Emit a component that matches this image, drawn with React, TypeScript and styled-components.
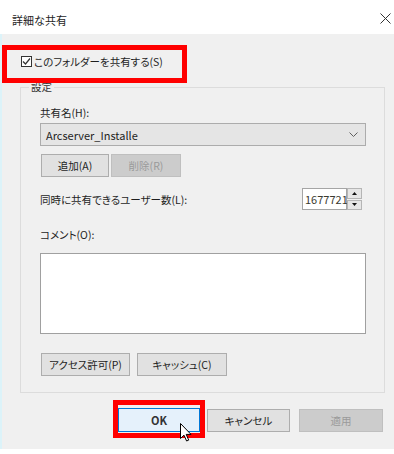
import React from 'react';
import styled, { createGlobalStyle } from 'styled-components';

const GlobalStyle = createGlobalStyle`
  html, body {
    margin: 0;
    padding: 0;
    background: #ffffff;
  }
  body {
    font-family: "Noto Sans CJK JP", "Noto Sans", sans-serif;
    font-feature-settings: "palt";
    color: #1e1e1e;
  }
`;

const Window = styled.div`
  width: 394px;
  height: 449px;
  display: flex;
  flex-direction: column;
  background: #f0f0f0;
`;

const TitleBar = styled.div`
  height: 34px;
  flex-shrink: 0;
  display: flex;
  align-items: flex-start;
  justify-content: space-between;
  padding: 0 3px 0 12px;
  background: #ffffff;
`;

const Title = styled.span`
  margin-top: 13px;
  font-size: 11px;
  line-height: 14px;
  font-feature-settings: normal;
`;

const CloseIcon = styled.svg`
  margin-top: 13px;
  width: 11px;
  height: 11px;
`;

const Body = styled.div`
  flex: 1;
  display: flex;
  flex-direction: column;
  border-left: 2px solid #dcf3f9;
`;

const Highlight = styled.div<{ $pad?: string }>`
  position: relative;
  box-sizing: border-box;
  border: 5px solid #ff0000;
  padding: ${p => p.$pad || '0'};
`;

const ShareToggle = styled(Highlight)`
  margin-top: 11px;
  width: 185px;
  height: 38px;
  display: flex;
  align-items: center;
  gap: 2px;
  padding: 0 0 4px 14px;
  font-size: 10.5px;
  line-height: 14px;
`;

const CheckBox = styled.span`
  width: 11px;
  height: 11px;
  box-sizing: border-box;
  border: 1px solid #333333;
  background: #ffffff;
  display: flex;
  align-items: center;
  justify-content: center;
  margin-bottom: 2px;
`;

const Group = styled.fieldset`
  margin: -2px 9px 0 18px;
  padding: 0 18px 16px 19px;
  border: 1px solid #dcdcdc;
  min-width: 0;
  display: flex;
  flex-direction: column;
`;

const GroupLabel = styled.legend`
  margin-left: -11px;
  padding: 0 2px;
  font-size: 10.5px;
  line-height: 12px;
  color: #333333;
`;

const FieldLabel = styled.div<{ $top: number }>`
  margin-top: ${p => p.$top}px;
  font-size: 10.5px;
  line-height: 14px;
`;

const ComboBox = styled.div`
  margin-top: 3px;
  height: 23px;
  box-sizing: border-box;
  display: flex;
  align-items: center;
  justify-content: space-between;
  padding: 0 7px 0 5px;
  background: #e5e5e5;
  border: 1px solid #acacac;
  font-size: 11px;
  font-feature-settings: normal;
`;

const ButtonRow = styled.div<{ $top: number; $gap: number }>`
  margin-top: ${p => p.$top}px;
  display: flex;
  gap: ${p => p.$gap}px;
  padding-left: 1px;
`;

const Button = styled.div<{ $width: number; $disabled?: boolean }>`
  width: ${p => p.$width}px;
  height: 23px;
  box-sizing: border-box;
  display: flex;
  align-items: center;
  justify-content: center;
  font-size: 10.5px;
  background: ${p => (p.$disabled ? '#cccccc' : '#e1e1e1')};
  border: 1px solid ${p => (p.$disabled ? '#bfbfbf' : '#adadad')};
  color: ${p => (p.$disabled ? '#9a9a9a' : '#1e1e1e')};
`;

const LimitRow = styled.div`
  margin-top: 11px;
  height: 22px;
  display: flex;
  align-items: center;
  justify-content: space-between;
  padding-right: 4px;
  font-size: 10.5px;
`;

const Spinner = styled.div`
  display: flex;
  height: 22px;
`;

const SpinValue = styled.div`
  width: 45px;
  box-sizing: border-box;
  border: 1px solid #a5a5a5;
  background: #ffffff;
  padding-left: 2px;
  font-size: 11px;
  line-height: 20px;
  color: #3a3a30;
  font-feature-settings: normal;
`;

const SpinButtons = styled.div`
  width: 15px;
  display: flex;
  flex-direction: column;
  gap: 1px;
`;

const SpinButton = styled.div`
  flex: 1;
  display: flex;
  align-items: center;
  justify-content: center;
  background: #e6e6e6;
  border: 1px solid #b5b5b5;
`;

const CommentBox = styled.textarea`
  margin-top: 11px;
  height: 81px;
  box-sizing: border-box;
  border: 1px solid #a0a0a0;
  background: #ffffff;
  resize: none;
  outline: none;
`;

const Footer = styled.div`
  margin-top: 7px;
  display: flex;
  align-items: flex-start;
  justify-content: flex-end;
  padding-right: 11px;
`;

const OkFrame = styled(Highlight)`
  width: 92px;
  height: 38px;
  padding: 3px 0 1px;
`;

const OkButton = styled.div`
  height: 24px;
  box-sizing: border-box;
  display: flex;
  align-items: center;
  justify-content: center;
  background: #e5f1fb;
  border: 1px solid #0078d7;
  font-size: 11px;
  font-weight: bold;
  color: #333333;
  font-feature-settings: normal;
`;

const FooterButton = styled(Button)<{ $left: number }>`
  margin-top: 9px;
  margin-left: ${p => p.$left}px;
`;

const Pointer = styled.svg`
  position: absolute;
  left: 62px;
  top: 18px;
  width: 13px;
  height: 19px;
`;

const Chevron = () => (
  <svg width="9" height="5" viewBox="0 0 9 5">
    <path d="M0.5 0.5 L4.5 4.5 L8.5 0.5" fill="none" stroke="#606060" strokeWidth="1" />
  </svg>
);

const Arrow = ({ up }: { up?: boolean }) => (
  <svg width="5" height="3" viewBox="0 0 5 3">
    <path d={up ? 'M2.5 0 L5 3 L0 3 Z' : 'M0 0 L5 0 L2.5 3 Z'} fill="#111111" />
  </svg>
);

const App: React.FC = () => {
  return (
    <>
      <GlobalStyle />
      <Window>
        <TitleBar>
          <Title>詳細な共有</Title>
          <CloseIcon viewBox="0 0 11 11">
            <path d="M0.5 0.5 L10.5 10.5 M10.5 0.5 L0.5 10.5" stroke="#333333" strokeWidth="1" />
          </CloseIcon>
        </TitleBar>
        <Body>
          <ShareToggle>
            <CheckBox>
              <svg width="9" height="9" viewBox="0 0 9 9">
                <path d="M1 4.5 L3.5 7 L8 1.5" fill="none" stroke="#333333" strokeWidth="1.2" />
              </svg>
            </CheckBox>
            <span>このフォルダーを共有する(S)</span>
          </ShareToggle>

          <Group>
            <GroupLabel>設定</GroupLabel>
            <FieldLabel $top={13}>共有名(H):</FieldLabel>
            <ComboBox>
              <span>Arcserver_Installe</span>
              <Chevron />
            </ComboBox>
            <ButtonRow $top={8} $gap={2}>
              <Button $width={68}>追加(A)</Button>
              <Button $width={70} $disabled>削除(R)</Button>
            </ButtonRow>
            <LimitRow>
              <span>同時に共有できるユーザー数(L):</span>
              <Spinner>
                <SpinValue>1677721</SpinValue>
                <SpinButtons>
                  <SpinButton><Arrow up /></SpinButton>
                  <SpinButton><Arrow /></SpinButton>
                </SpinButtons>
              </Spinner>
            </LimitRow>
            <FieldLabel $top={18}>コメント(O):</FieldLabel>
            <CommentBox defaultValue="" />
            <ButtonRow $top={19} $gap={7}>
              <Button $width={89}>アクセス許可(P)</Button>
              <Button $width={90}>キャッシュ(C)</Button>
            </ButtonRow>
          </Group>

          <Footer>
            <OkFrame>
              <OkButton>OK</OkButton>
              <Pointer viewBox="0 0 13 19">
                <path d="M0.5 0.5 L0.5 15.5 L4 12.2 L6.6 18 L8.7 17.1 L6.2 11.4 L11 11.4 Z" fill="#ffffff" stroke="#000000" strokeWidth="1" strokeLinejoin="round" />
              </Pointer>
            </OkFrame>
            <FooterButton $width={83} $left={2}>キャンセル</FooterButton>
            <FooterButton $width={84} $left={9} $disabled>適用</FooterButton>
          </Footer>
        </Body>
      </Window>
    </>
  );
};

export default App;
